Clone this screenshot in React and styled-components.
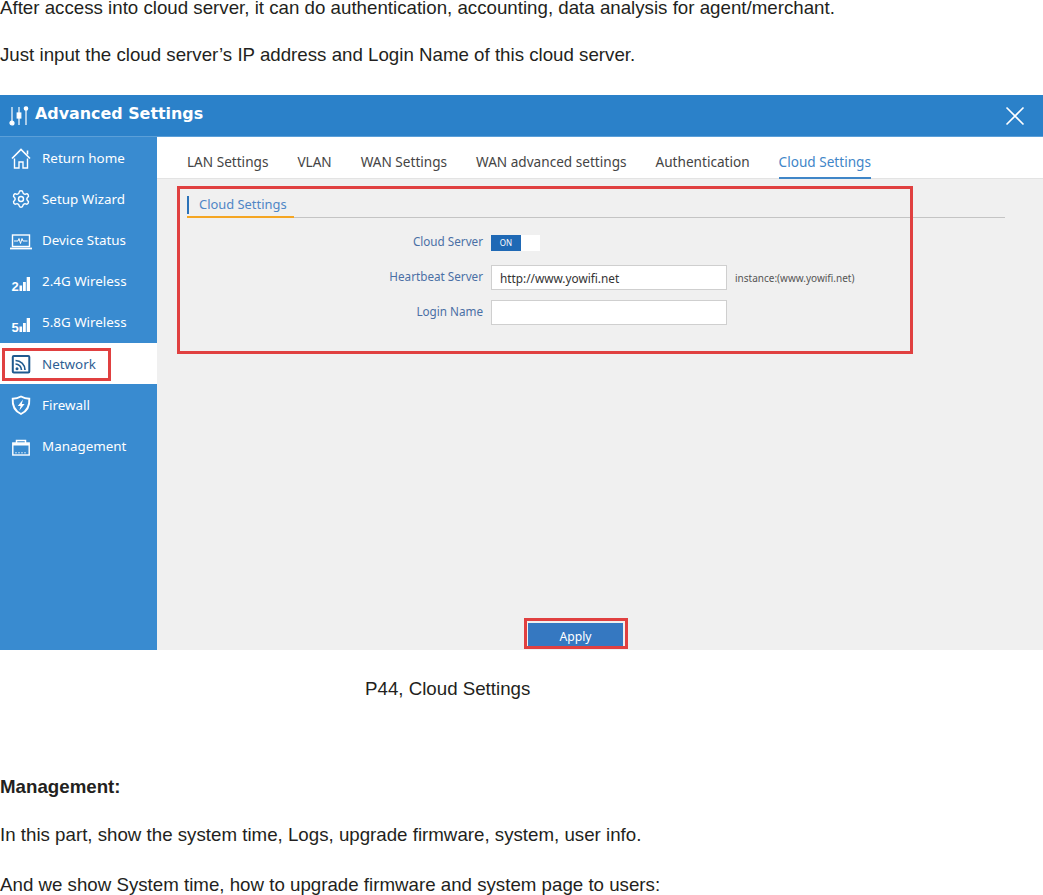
import React from "react";
import styled, { createGlobalStyle } from "styled-components";
import { Settings } from "lucide-react";

const GlobalStyle = createGlobalStyle`
  html, body {
    margin: 0;
    padding: 0;
    background: #fff;
  }
  body {
    width: 1043px;
    height: 895px;
    overflow: hidden;
    font-family: "Liberation Sans", Arial, sans-serif;
    color: #231f20;
  }
`;

const navItems = [
  { name: "Return home", icon: "home" },
  { name: "Setup Wizard", icon: "gear" },
  { name: "Device Status", icon: "laptop" },
  { name: "2.4G Wireless", icon: "signal2" },
  { name: "5.8G Wireless", icon: "signal5" },
  { name: "Network", icon: "network", active: true },
  { name: "Firewall", icon: "shield" },
  { name: "Management", icon: "case" },
];

const tabs = [
  "LAN Settings",
  "VLAN",
  "WAN Settings",
  "WAN advanced settings",
  "Authentication",
  "Cloud Settings",
];

const NavIcon = ({ type }) => {
  if (type === "gear") return <Settings size={20} color="#fff" strokeWidth={1.7} />;

  const stroke = type === "network" ? "#1f5a8f" : "#fff";
  const common = { fill: "none", stroke, strokeWidth: 1.4 };
  return (
    <NavSvg width="20" height="20" viewBox="0 0 20 20">
      {type === "home" && (
        <g {...common}>
          <path d="M1 10.500 10 1.500l9 9" strokeWidth="1.700" />
          <path d="M3.500 10.500V20h4.500v-6h4v6h4.500v-9.500" />
          <path d="M16.500 2.500v4" strokeWidth="1.600" />
        </g>
      )}
      {type === "laptop" && (
        <g {...common}>
          <rect x="1.500" y="5" width="17" height="11.500" />
          <path d="M-1 18.500h22" strokeWidth="1.800" />
          <path d="M3 11h4l1-2.500 1.500 5 1.500-5 1 2.500h4.500" strokeWidth="1" />
        </g>
      )}
      {(type === "signal2" || type === "signal5") && (
        <g fill="#fff">
          <SignalDigit x="0.500" y="20">
            {type === "signal2" ? "2" : "5"}
          </SignalDigit>
          <rect x="8.500" y="14.500" width="2.600" height="5.500" />
          <rect x="12" y="11" width="2.800" height="9" />
          <rect x="15.700" y="6" width="3.300" height="14" />
        </g>
      )}
      {type === "network" && (
        <g>
          <rect x="1.800" y="2" width="16.500" height="16.500" rx="1" {...common} strokeWidth="2" />
          <path d="M4.500 6.500c5.300 0 9.500 4.200 9.500 9.500" {...common} strokeWidth="1.700" />
          <path d="M4.500 10c3.300 0 6 2.700 6 6" {...common} strokeWidth="1.700" />
          <circle cx="6" cy="14.800" r="1.500" fill={stroke} />
        </g>
      )}
      {type === "shield" && (
        <g>
          <path d="M10 1.500c2.500 1.400 5.500 2.200 8.300 2.200 .5 6.800-2.300 12.400-8.300 15.300C4 16.100 1.200 10.500 1.700 3.700c2.800 0 5.800-.8 8.300-2.200z" {...common} strokeWidth="1.900" />
          <path d="M12 4.500 6.800 11h2.800l-1.200 4.500 5.200-6.500h-2.800z" fill="#fff" />
        </g>
      )}
      {type === "case" && (
        <g {...common}>
          <rect x="1.800" y="7" width="16.400" height="12" />
          <path d="M1.800 8.300h16.400" strokeWidth="2.400" />
          <path d="M5.500 7V4.500h9V7" strokeWidth="1.500" />
          <path d="M4 16.800h12" strokeWidth=".7" strokeDasharray="2 1" />
        </g>
      )}
    </NavSvg>
  );
};

const App = () => (
  <Page>
    <GlobalStyle />
    <FirstLine>
      After access into cloud server, it can do authentication, accounting, data analysis for agent/merchant.
    </FirstLine>
    <Line>Just input the cloud server’s IP address and Login Name of this cloud server.</Line>

    <Shot>
      <Header>
        <svg width="20" height="20" viewBox="0 0 20 20" fill="none" stroke="#fff" strokeWidth="1.200">
          <path d="M3 1v16M10 1v18M17 2v17" />
          <circle cx="3" cy="17" r="2" fill="#fff" />
          <rect x="8.200" y="7" width="3.600" height="5" fill="#fff" />
          <circle cx="17" cy="2.500" r="1.700" fill="#fff" />
        </svg>
        <HeaderTitle>Advanced Settings</HeaderTitle>
        <CloseIcon width="20" height="20" viewBox="0 0 20 20" fill="none" stroke="#fff" strokeWidth="1.600">
          <path d="M1.500 1.500l17 17M18.500 1.500l-17 17" />
        </CloseIcon>
      </Header>
      <Body>
        <Sidebar>
          {navItems.map(item => (
            <NavItem key={item.name} $active={item.active}>
              <NavIcon type={item.icon} />
              <span>{item.name}</span>
              {item.active && <NetworkMark />}
            </NavItem>
          ))}
        </Sidebar>
        <Main>
          <Tabs>
            {tabs.map(tab => (
              <Tab key={tab} $active={tab === "Cloud Settings"}>
                {tab}
              </Tab>
            ))}
          </Tabs>
          <Section>
            <SectionHead>
              <SectionTitle>Cloud Settings</SectionTitle>
            </SectionHead>
            <Form>
              <Label>Cloud Server</Label>
              <Toggle>
                <ToggleOn>ON</ToggleOn>
              </Toggle>
              <Label>Heartbeat Server</Label>
              <FieldRow>
                <Field>http://www.yowifi.net</Field>
                <Hint>instance:(www.yowifi.net)</Hint>
              </FieldRow>
              <Label>Login Name</Label>
              <FieldRow>
                <Field />
              </FieldRow>
            </Form>
          </Section>
          <Footer>
            <ApplyButton>
              Apply
              <ApplyMark />
            </ApplyButton>
          </Footer>
          <PanelMark />
        </Main>
      </Body>
    </Shot>

    <Caption>P44, Cloud Settings</Caption>
    <Heading>Management:</Heading>
    <InfoLine>In this part, show the system time, Logs, upgrade firmware, system, user info.</InfoLine>
    <LastLine>And we show System time, how to upgrade firmware and system page to users:</LastLine>
  </Page>
);

const Page = styled.div`
  width: 1043px;
  font-size: 18.72px;
  line-height: 20px;
`;

const FirstLine = styled.p`
  margin: 0 0 29px;
  line-height: 16px;
`;

const Line = styled.p`
  margin: 27px 0 0;
`;

const InfoLine = styled(Line)`
  margin-top: 28px;
`;

const LastLine = styled(Line)`
  margin-top: 30px;
`;

const Shot = styled.div`
  height: 555px;
  margin-top: 30px;
  display: flex;
  flex-direction: column;
  font-family: "Noto Sans", "Open Sans", sans-serif;
`;

const Header = styled.div`
  height: 42px;
  flex: none;
  padding: 0 18px 0 9px;
  display: flex;
  align-items: center;
  gap: 6px;
  background: #2b81c9;
  border-bottom: 1px solid #5b9fd8;
  box-sizing: border-box;
`;

const HeaderTitle = styled.div`
  margin-top: -3px;
  font-family: "DejaVu Sans", sans-serif;
  font-size: 15.9px;
  font-weight: 700;
  color: #fff;
`;

const CloseIcon = styled.svg`
  margin-left: auto;
`;

const Body = styled.div`
  flex: 1;
  min-height: 0;
  display: flex;
`;

const Sidebar = styled.div`
  width: 157px;
  flex: none;
  background: #398bd0;
`;

const NavItem = styled.div`
  position: relative;
  height: 41.2px;
  padding-left: 11px;
  display: flex;
  align-items: center;
  gap: 11px;
  box-sizing: border-box;
  font-size: 13.4px;
  color: ${props => (props.$active ? "#2f5f94" : "#fff")};
  background: ${props => (props.$active ? "#fff" : "transparent")};
`;

const NavSvg = styled.svg`
  flex: none;
  overflow: visible;
`;

const SignalDigit = styled.text`
  font-family: "Liberation Sans", Arial, sans-serif;
  font-size: 13px;
  font-weight: 700;
`;

const Main = styled.div`
  position: relative;
  flex: 1;
  display: flex;
  flex-direction: column;
  background: #f0f0f0;
`;

const Tabs = styled.div`
  height: 41px;
  flex: none;
  padding-left: 30px;
  display: flex;
  gap: 29px;
  background: #fff;
  border-bottom: 1px solid #e3e3e3;
`;

const Tab = styled.div`
  height: 42px;
  line-height: 50px;
  box-sizing: border-box;
  font-size: 13.6px;
  white-space: nowrap;
  color: ${props => (props.$active ? "#3f86c8" : "#444")};
  border-bottom: ${props => (props.$active ? "2px solid #3f86c8" : "none")};
`;

const Section = styled.div`
  padding: 16px 38px 0 30px;
`;

const SectionHead = styled.div`
  height: 22px;
  border-bottom: 1px solid #c4c4c4;
`;

const SectionTitle = styled.div`
  width: 107px;
  height: 23px;
  padding-left: 12px;
  box-sizing: border-box;
  position: relative;
  font-size: 12.9px;
  line-height: 19px;
  color: #4f86c6;
  border-bottom: 2px solid #f5a623;

  &::before {
    content: "";
    position: absolute;
    left: 0;
    top: 1px;
    width: 2px;
    height: 18px;
    background: #2b72b8;
  }
`;

const Form = styled.div`
  margin-top: 12px;
  display: grid;
  grid-template-columns: 296px 1fr;
  grid-auto-rows: 25px;
  column-gap: 8px;
  row-gap: 10px;
  align-items: center;
`;

const Label = styled.div`
  text-align: right;
  font-size: 11.7px;
  color: #4a6fa5;
  transform: translateY(-2px);
`;

const Toggle = styled.div`
  width: 49px;
  height: 16px;
  background: #fff;
`;

const ToggleOn = styled.div`
  width: 30px;
  height: 16px;
  line-height: 16px;
  text-align: center;
  font-size: 8px;
  color: #fff;
  background: #1f69b5;
`;

const FieldRow = styled.div`
  display: flex;
  align-items: center;
  gap: 8px;
`;

const Field = styled.div`
  width: 236px;
  height: 25px;
  padding-left: 8px;
  box-sizing: border-box;
  font-size: 11.8px;
  line-height: 25px;
  color: #333;
  background: #fff;
  border: 1px solid #cfcfcf;
`;

const Hint = styled.div`
  font-size: 10px;
  color: #555;
`;

const Footer = styled.div`
  margin-top: auto;
  padding: 0 0 3px 371px;
`;

const ApplyButton = styled.div`
  position: relative;
  width: 95px;
  height: 24px;
  line-height: 27px;
  text-align: center;
  font-size: 12.2px;
  color: #fff;
  background: #3578c1;
`;

const Highlight = styled.div`
  position: absolute;
  box-sizing: border-box;
  border: 3px solid #e04040;
  pointer-events: none;
`;

const NetworkMark = styled(Highlight)`
  left: 2px;
  top: 5px;
  width: 109px;
  height: 33px;
`;

const PanelMark = styled(Highlight)`
  left: 20px;
  top: 49px;
  width: 736px;
  height: 168px;
`;

const ApplyMark = styled(Highlight)`
  left: -4px;
  top: -5px;
  width: 104px;
  height: 31px;
`;

const Caption = styled.p`
  margin: 29px 0 0 365px;
`;

const Heading = styled.p`
  margin: 78px 0 0;
  font-weight: 700;
`;

export default App;
